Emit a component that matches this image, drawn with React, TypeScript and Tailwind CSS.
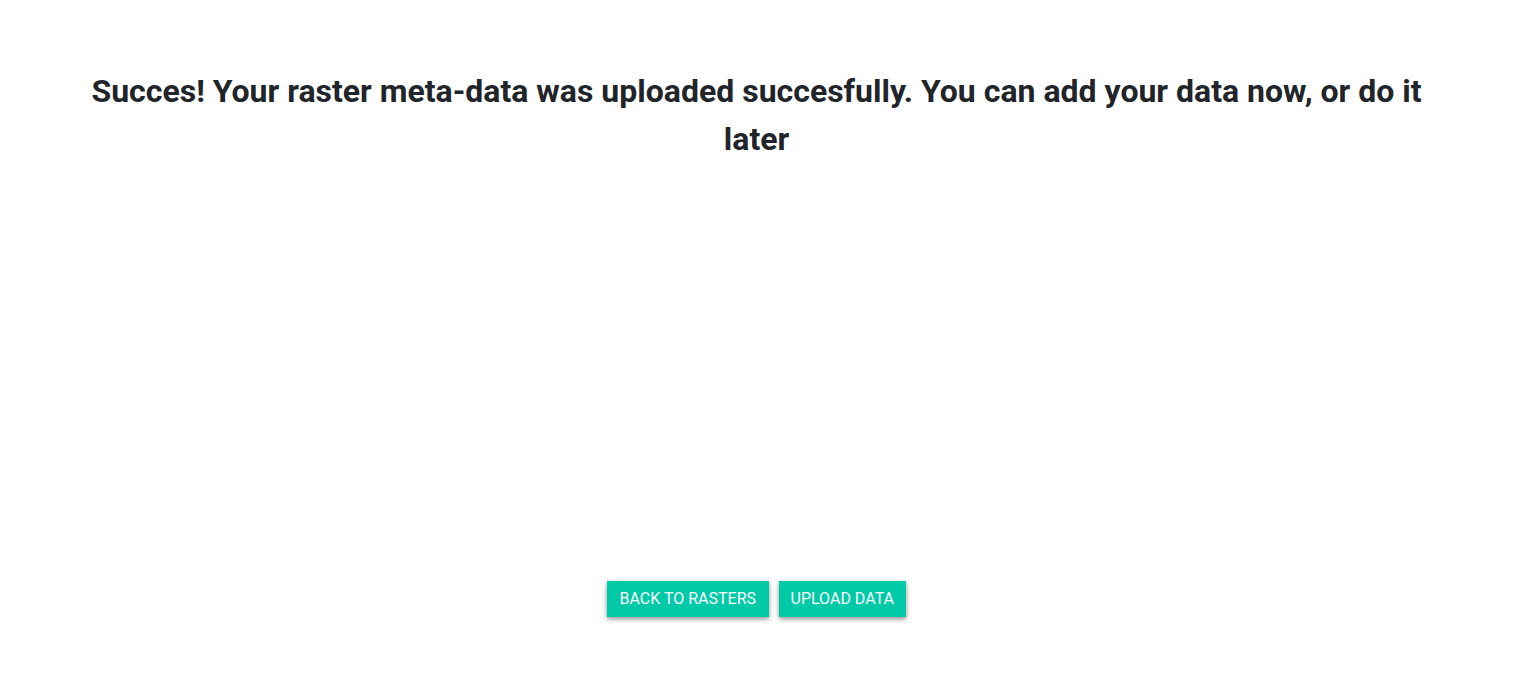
export default function App() {
  return (
    <div className="min-h-screen bg-white font-['Roboto',sans-serif] text-[#212529]">
      <div className="px-[80px] pt-[67px]">
        <h1 className="text-center text-[32px] font-bold leading-[48px]">
          Succes! Your raster meta-data was uploaded succesfully. You can add your data now, or do it later
        </h1>
      </div>
      <div className="mt-[418px] flex justify-center gap-[10px]">
        <button className="h-[36px] bg-[#00c9a7] px-[12.5px] text-[16px] font-normal uppercase text-white shadow-[0_2px_5px_rgba(0,0,0,0.45)]">
          Back to rasters
        </button>
        <button className="h-[36px] bg-[#00c9a7] px-[12px] text-[16px] font-normal uppercase text-white shadow-[0_2px_5px_rgba(0,0,0,0.45)]">
          Upload data
        </button>
      </div>
    </div>
  );
}
